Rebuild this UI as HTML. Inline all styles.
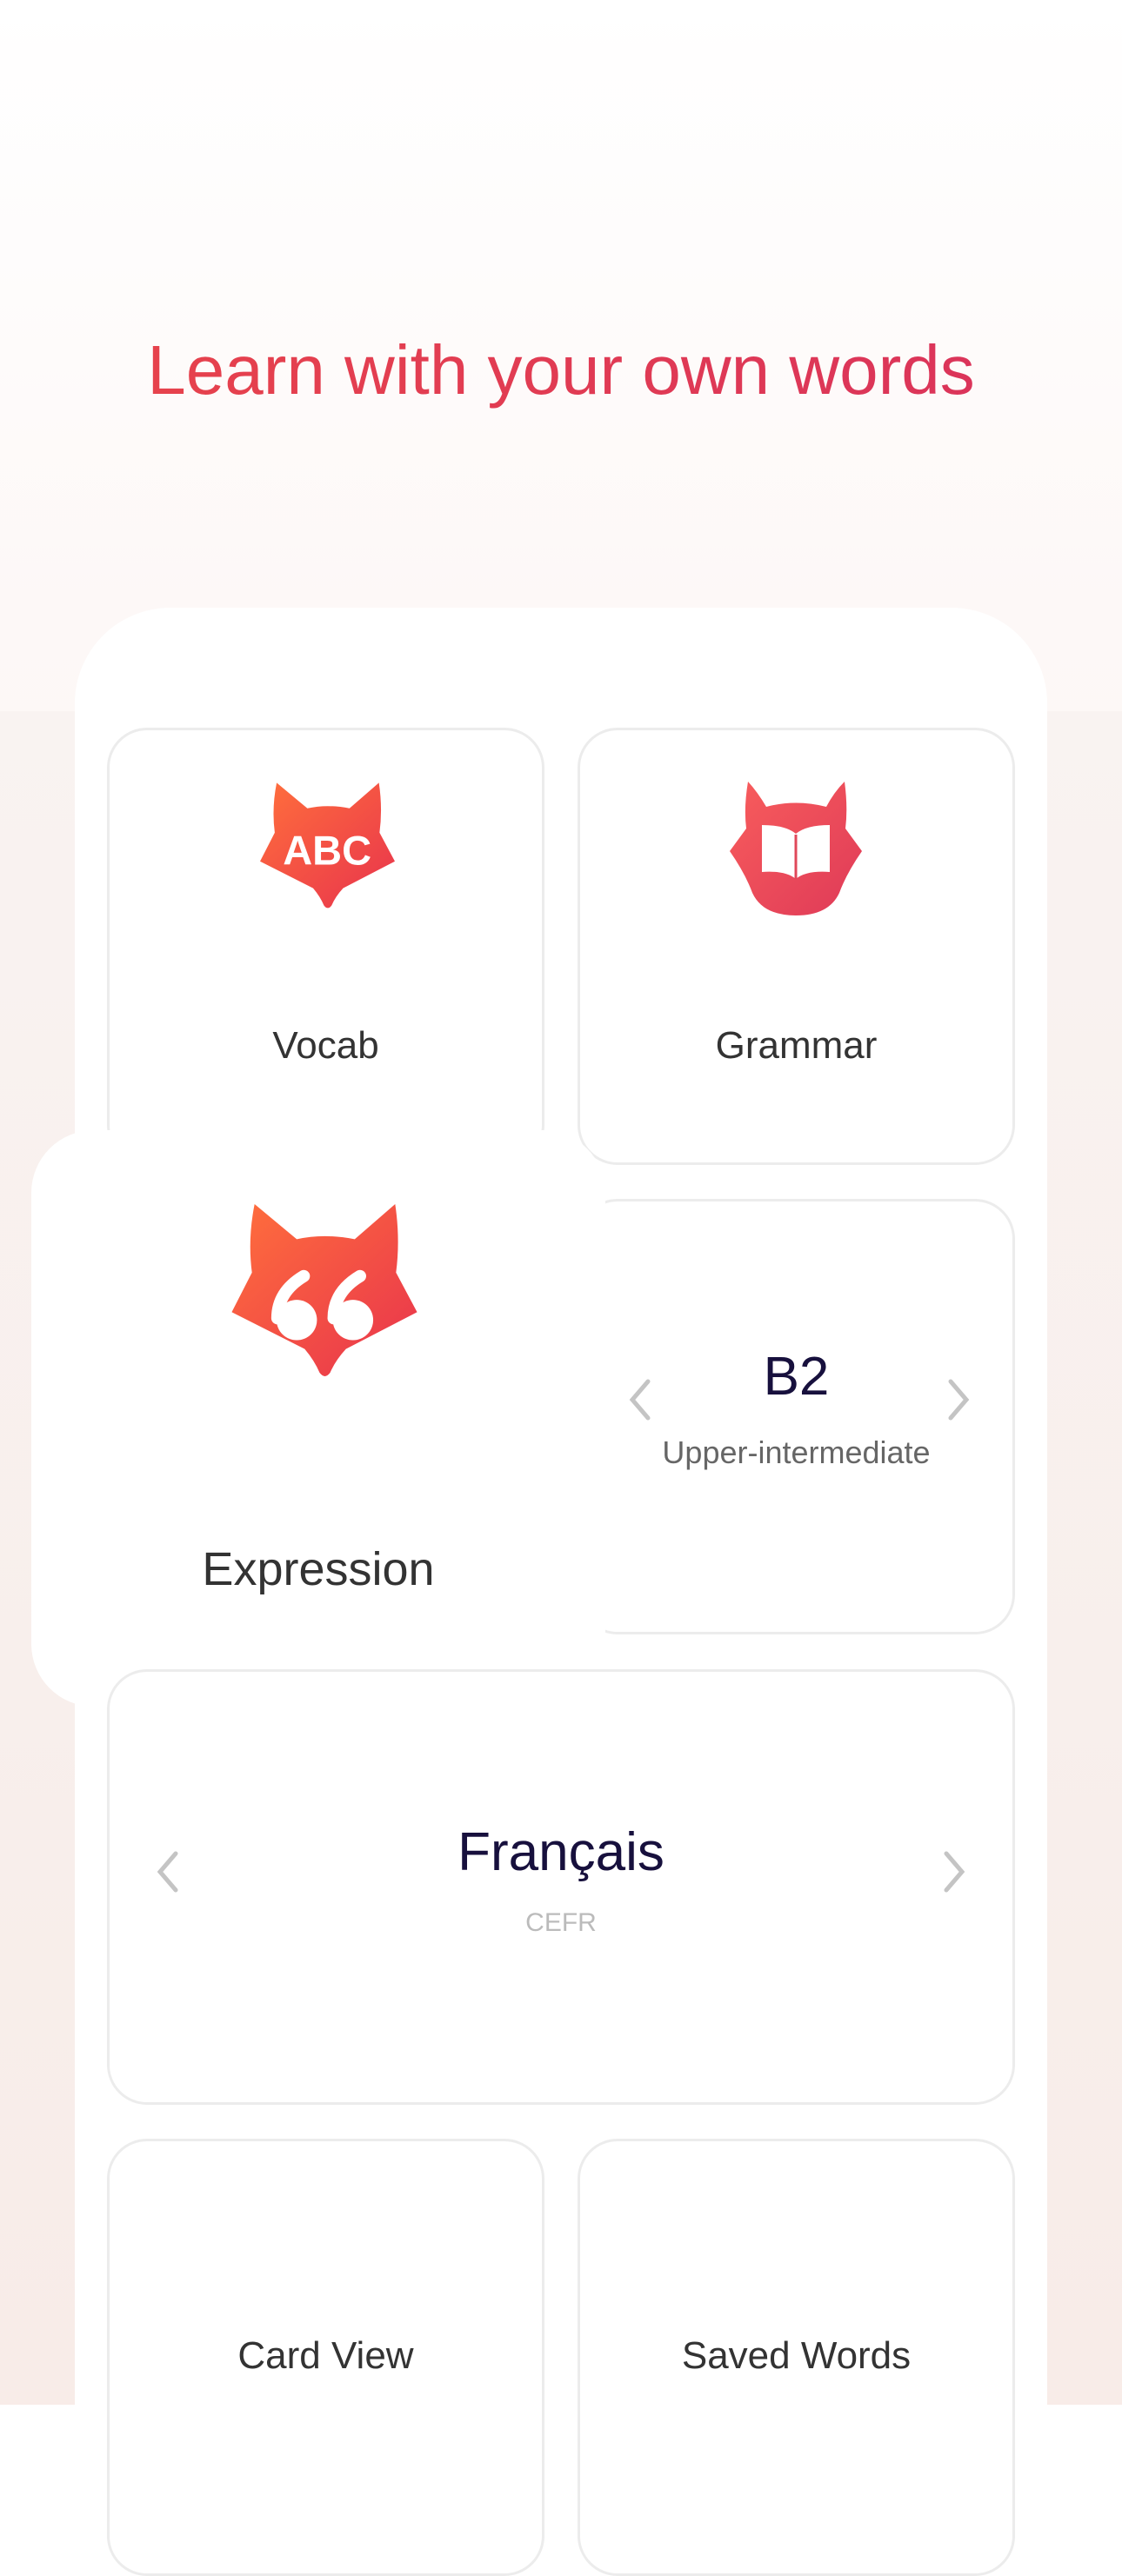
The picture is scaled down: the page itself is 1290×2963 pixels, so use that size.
<!DOCTYPE html>
<html><head><meta charset="utf-8"><style>
*{margin:0;padding:0;box-sizing:border-box}
body{width:1290px;height:2796px;position:relative;overflow:hidden;font-family:"Liberation Sans",sans-serif;background:#fff}
.bg{position:absolute;left:0;top:0;width:1290px;height:2766px;background:linear-gradient(#ffffff 0px,#fdf8f7 700px,#f9f1ee 2766px)}
.bg2{position:absolute;left:0;top:818px;width:1290px;height:1948px;background:linear-gradient(#f9f3f1,#f8ece8)}
.title{position:absolute;left:0;width:1290px;top:378px;text-align:center;font-size:80px;line-height:96px;background:linear-gradient(90deg,#e8444a,#d9325c);-webkit-background-clip:text;color:transparent}
.panel{position:absolute;left:86px;top:699px;width:1118px;height:2200px;background:#fff;border-radius:110px}
.card{position:absolute;background:#fff;border:3px solid #ececec;border-radius:46px}
.lbl{position:absolute;left:0;right:0;text-align:center;color:#333;font-size:44px}
.big{position:absolute;left:36px;top:1300px;width:660px;height:663px;background:#fff;border-radius:72px}
.chev{position:absolute}
</style></head><body>
<div class="bg"></div><div class="bg2"></div>
<div class="title">Learn with your own words</div>
<div class="panel"></div>
<svg width="0" height="0" style="position:absolute">
<defs>
<linearGradient id="g1" x1="0" y1="0" x2="1" y2="1"><stop offset="0" stop-color="#ff6f3c"/><stop offset="1" stop-color="#e8334d"/></linearGradient>
<linearGradient id="g2" x1="0" y1="0" x2="1" y2="1"><stop offset="0" stop-color="#f85d5c"/><stop offset="1" stop-color="#df3a58"/></linearGradient>
</defs></svg>

<div class="card" style="left:123px;top:837px;width:503px;height:503px">
  <svg style="position:absolute;left:173px;top:60px" width="155" height="147" viewBox="0 0 211 199">
    <path d="M26,0 L74,40 Q105,33 140,40 L186,0 Q192,40 187,78 L211,123 L130,165 Q118,178 112,192 Q106,200 100,192 Q94,178 83,165 L0,123 L23,78 Q18,40 26,0 Z" fill="url(#g1)"/>
    <text x="105" y="128" text-anchor="middle" font-family="Liberation Sans" font-weight="bold" font-size="64" fill="#fff">ABC</text>
  </svg>
  <div class="lbl" style="top:338px">Vocab</div>
</div>
<div class="card" style="left:664px;top:837px;width:503px;height:503px">
  <svg style="position:absolute;left:172px;top:59px" width="152" height="154" viewBox="0 0 152 154">
    <path d="M21,0 Q32,12 42,29 Q76,20 111,29 Q120,12 132,0 Q136,30 133,54 L152,80 Q134,106 126,128 Q114,154 76,154 Q38,154 26,128 Q18,106 0,80 L19,54 Q16,30 21,0 Z" fill="url(#g2)"/>
    <path d="M76,60 Q64,50 37,50 L37,104 Q64,102 76,112 Q88,102 115,104 L115,50 Q88,50 76,60 Z" fill="#fff"/>
    <line x1="76" y1="61" x2="76" y2="112" stroke="#e0485a" stroke-width="3"/>
  </svg>
  <div class="lbl" style="top:338px">Grammar</div>
</div>

<div class="card" style="left:664px;top:1379px;width:503px;height:501px">
  <div style="position:absolute;left:0;right:0;top:166px;text-align:center;font-size:62px;color:#17103d;font-weight:500">B2</div>
  <div style="position:absolute;left:0;right:0;top:268px;text-align:center;font-size:36px;color:#666">Upper-intermediate</div>
  <svg class="chev" style="left:54px;top:203px" width="30" height="50"><path d="M24,4 L6,25 L24,46" fill="none" stroke="#c4c4c4" stroke-width="5" stroke-linecap="round"/></svg>
  <svg class="chev" style="left:420px;top:203px" width="30" height="50"><path d="M6,4 L24,25 L6,46" fill="none" stroke="#c4c4c4" stroke-width="5" stroke-linecap="round"/></svg>
</div>

<div class="big">
  <svg style="position:absolute;left:230px;top:85px" width="214" height="201" viewBox="0 0 211 199">
    <path d="M26,0 L74,40 Q105,33 140,40 L186,0 Q192,40 187,78 L211,123 L130,165 Q118,178 112,192 Q106,200 100,192 Q94,178 83,165 L0,123 L23,78 Q18,40 26,0 Z" fill="url(#g1)"/>
    <circle cx="74" cy="132" r="23" fill="#fff"/><path d="M52,130 Q52,100 82,82" fill="none" stroke="#fff" stroke-width="14" stroke-linecap="round"/>
    <circle cx="138" cy="132" r="23" fill="#fff"/><path d="M116,130 Q116,100 146,82" fill="none" stroke="#fff" stroke-width="14" stroke-linecap="round"/>
  </svg>
  <div class="lbl" style="top:474px;font-size:54px;font-weight:500;color:#333">Expression</div>
</div>

<div class="card" style="left:123px;top:1920px;width:1044px;height:501px">
  <div style="position:absolute;left:0;right:0;top:172px;text-align:center;font-size:62px;color:#17103d;font-weight:500">Français</div>
  <div style="position:absolute;left:0;right:0;top:272px;text-align:center;font-size:30px;color:#bbb">CEFR</div>
  <svg class="chev" style="left:52px;top:205px" width="30" height="50"><path d="M24,4 L6,25 L24,46" fill="none" stroke="#c4c4c4" stroke-width="5" stroke-linecap="round"/></svg>
  <svg class="chev" style="left:956px;top:205px" width="30" height="50"><path d="M6,4 L24,25 L6,46" fill="none" stroke="#c4c4c4" stroke-width="5" stroke-linecap="round"/></svg>
</div>

<div class="card" style="left:123px;top:2460px;width:503px;height:503px">
  <div class="lbl" style="top:222px">Card View</div>
</div>
<div class="card" style="left:664px;top:2460px;width:503px;height:503px">
  <div class="lbl" style="top:222px">Saved Words</div>
</div>
</body></html>
